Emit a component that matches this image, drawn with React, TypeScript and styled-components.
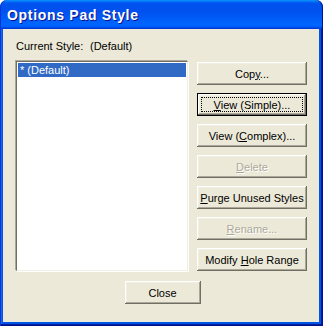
import React from "react";
import styled, { createGlobalStyle } from "styled-components";

const Global = createGlobalStyle`
  html, body { margin: 0; padding: 0; background: #fff; }
  body { width: 323px; height: 326px; overflow: hidden; }
`;

const Window = styled.div`
  width: 323px;
  height: 326px;
  display: flex;
  flex-direction: column;
  box-sizing: border-box;
  font-family: "Liberation Sans", Arial, sans-serif;
  font-size: 11px;
  color: #000;
`;

const TitleBar = styled.div`
  height: 29px;
  flex: none;
  box-sizing: border-box;
  border-radius: 7px 7px 0 0;
  background: linear-gradient(
    180deg,
    #0997ff 0px,
    #0053ee 3px,
    #0050ee 11px,
    #0066ff 25px,
    #005bff 27px,
    #003dd7 28px,
    #003dd7 29px
  );
  box-shadow: inset 1px 0 #0831d9, inset -1px 0 #00138c;
  display: flex;
  align-items: center;
  padding: 1px 0 0 7px;
`;

const Title = styled.span`
  font-family: "Liberation Sans", Arial, sans-serif;
  font-weight: bold;
  font-size: 14px;
  color: #fff;
  text-shadow: 1px 1px #0f1089;
  letter-spacing: 0.7px;
`;

const Frame = styled.div`
  flex: 1;
  display: flex;
  box-sizing: border-box;
  padding: 0 4px 4px 3px;
  background: #0055e5;
  box-shadow: inset 1px 0 #0831d9, inset -1px 0 #00138c, inset 0 -1px #00138c,
    inset -2px 0 #001ea0, inset 0 -2px #001ea0, inset 2px 0 #166aee;
`;

const Client = styled.div`
  flex: 1;
  background: #ece9d8;
  display: flex;
  flex-direction: column;
  padding: 11px 11px 0 12px;
`;

const InfoRow = styled.div`
  display: flex;
  height: 13px;
  line-height: 13px;
  margin-bottom: 7px;
  padding-left: 1px;
`;

const InfoLabel = styled.span`
  width: 74px;
`;

const Main = styled.div`
  display: flex;
  gap: 9px;
`;

const ListBox = styled.div`
  width: 172px;
  height: 210px;
  box-sizing: border-box;
  background: #fff;
  border-style: solid;
  border-width: 1px;
  border-color: #716f64 #f1efe2 #f1efe2 #716f64;
  box-shadow: -1px -1px 0 #aca899, 1px 1px 0 #fff;
  margin: 1px 0 0 1px;
  padding: 1px;
`;

const ListItem = styled.div<{ $selected?: boolean }>`
  height: 14px;
  line-height: 14px;
  padding-left: 2px;
  background: ${(p) => (p.$selected ? "#316ac5" : "transparent")};
  color: ${(p) => (p.$selected ? "#fff" : "#000")};
`;

const ButtonColumn = styled.div`
  display: flex;
  flex-direction: column;
  gap: 8px;
  padding-top: 2px;
`;

const Button = styled.button<{ $focused?: boolean; $w?: number }>`
  position: relative;
  width: ${(p) => p.$w ?? 110}px;
  height: 23px;
  margin: 0;
  padding: 0;
  box-sizing: border-box;
  font-family: "Liberation Sans", Arial, sans-serif;
  font-size: 11px;
  color: #000;
  background: #ece9d8;
  border: ${(p) => (p.$focused ? "1px solid #000" : "none")};
  box-shadow: inset -1px -1px #716f64, inset 1px 1px #fff,
    inset -2px -2px #aca899, inset 2px 2px #f1efe2;
  cursor: default;
  &:disabled {
    color: #aca899;
    text-shadow: 1px 1px #fff;
  }
  &::after {
    content: "";
    display: ${(p) => (p.$focused ? "block" : "none")};
    position: absolute;
    inset: 3px;
    border: 1px dotted #000;
  }
`;

const Key = styled.span`
  text-decoration: underline;
  text-underline-offset: 1px;
`;

const Footer = styled.div`
  display: flex;
  justify-content: center;
  margin-top: 10px;
  padding-left: 2px;
`;

export default function App() {
  return (
    <>
      <Global />
      <Window>
        <TitleBar>
          <Title>Options Pad Style</Title>
        </TitleBar>
        <Frame>
          <Client>
            <InfoRow>
              <InfoLabel>Current Style:</InfoLabel>
              <span>(Default)</span>
            </InfoRow>
            <Main>
              <ListBox>
                <ListItem $selected>* (Default)</ListItem>
              </ListBox>
              <ButtonColumn>
                <Button>
                  Cop<Key>y</Key>...
                </Button>
                <Button $focused>
                  <Key>V</Key>iew (Simple)...
                </Button>
                <Button>
                  View (<Key>C</Key>omplex)...
                </Button>
                <Button disabled>
                  <Key>D</Key>elete
                </Button>
                <Button>
                  <Key>P</Key>urge Unused Styles
                </Button>
                <Button disabled>
                  <Key>R</Key>ename...
                </Button>
                <Button>
                  Modify <Key>H</Key>ole Range
                </Button>
              </ButtonColumn>
            </Main>
            <Footer>
              <Button $w={76}>Close</Button>
            </Footer>
          </Client>
        </Frame>
      </Window>
    </>
  );
}
